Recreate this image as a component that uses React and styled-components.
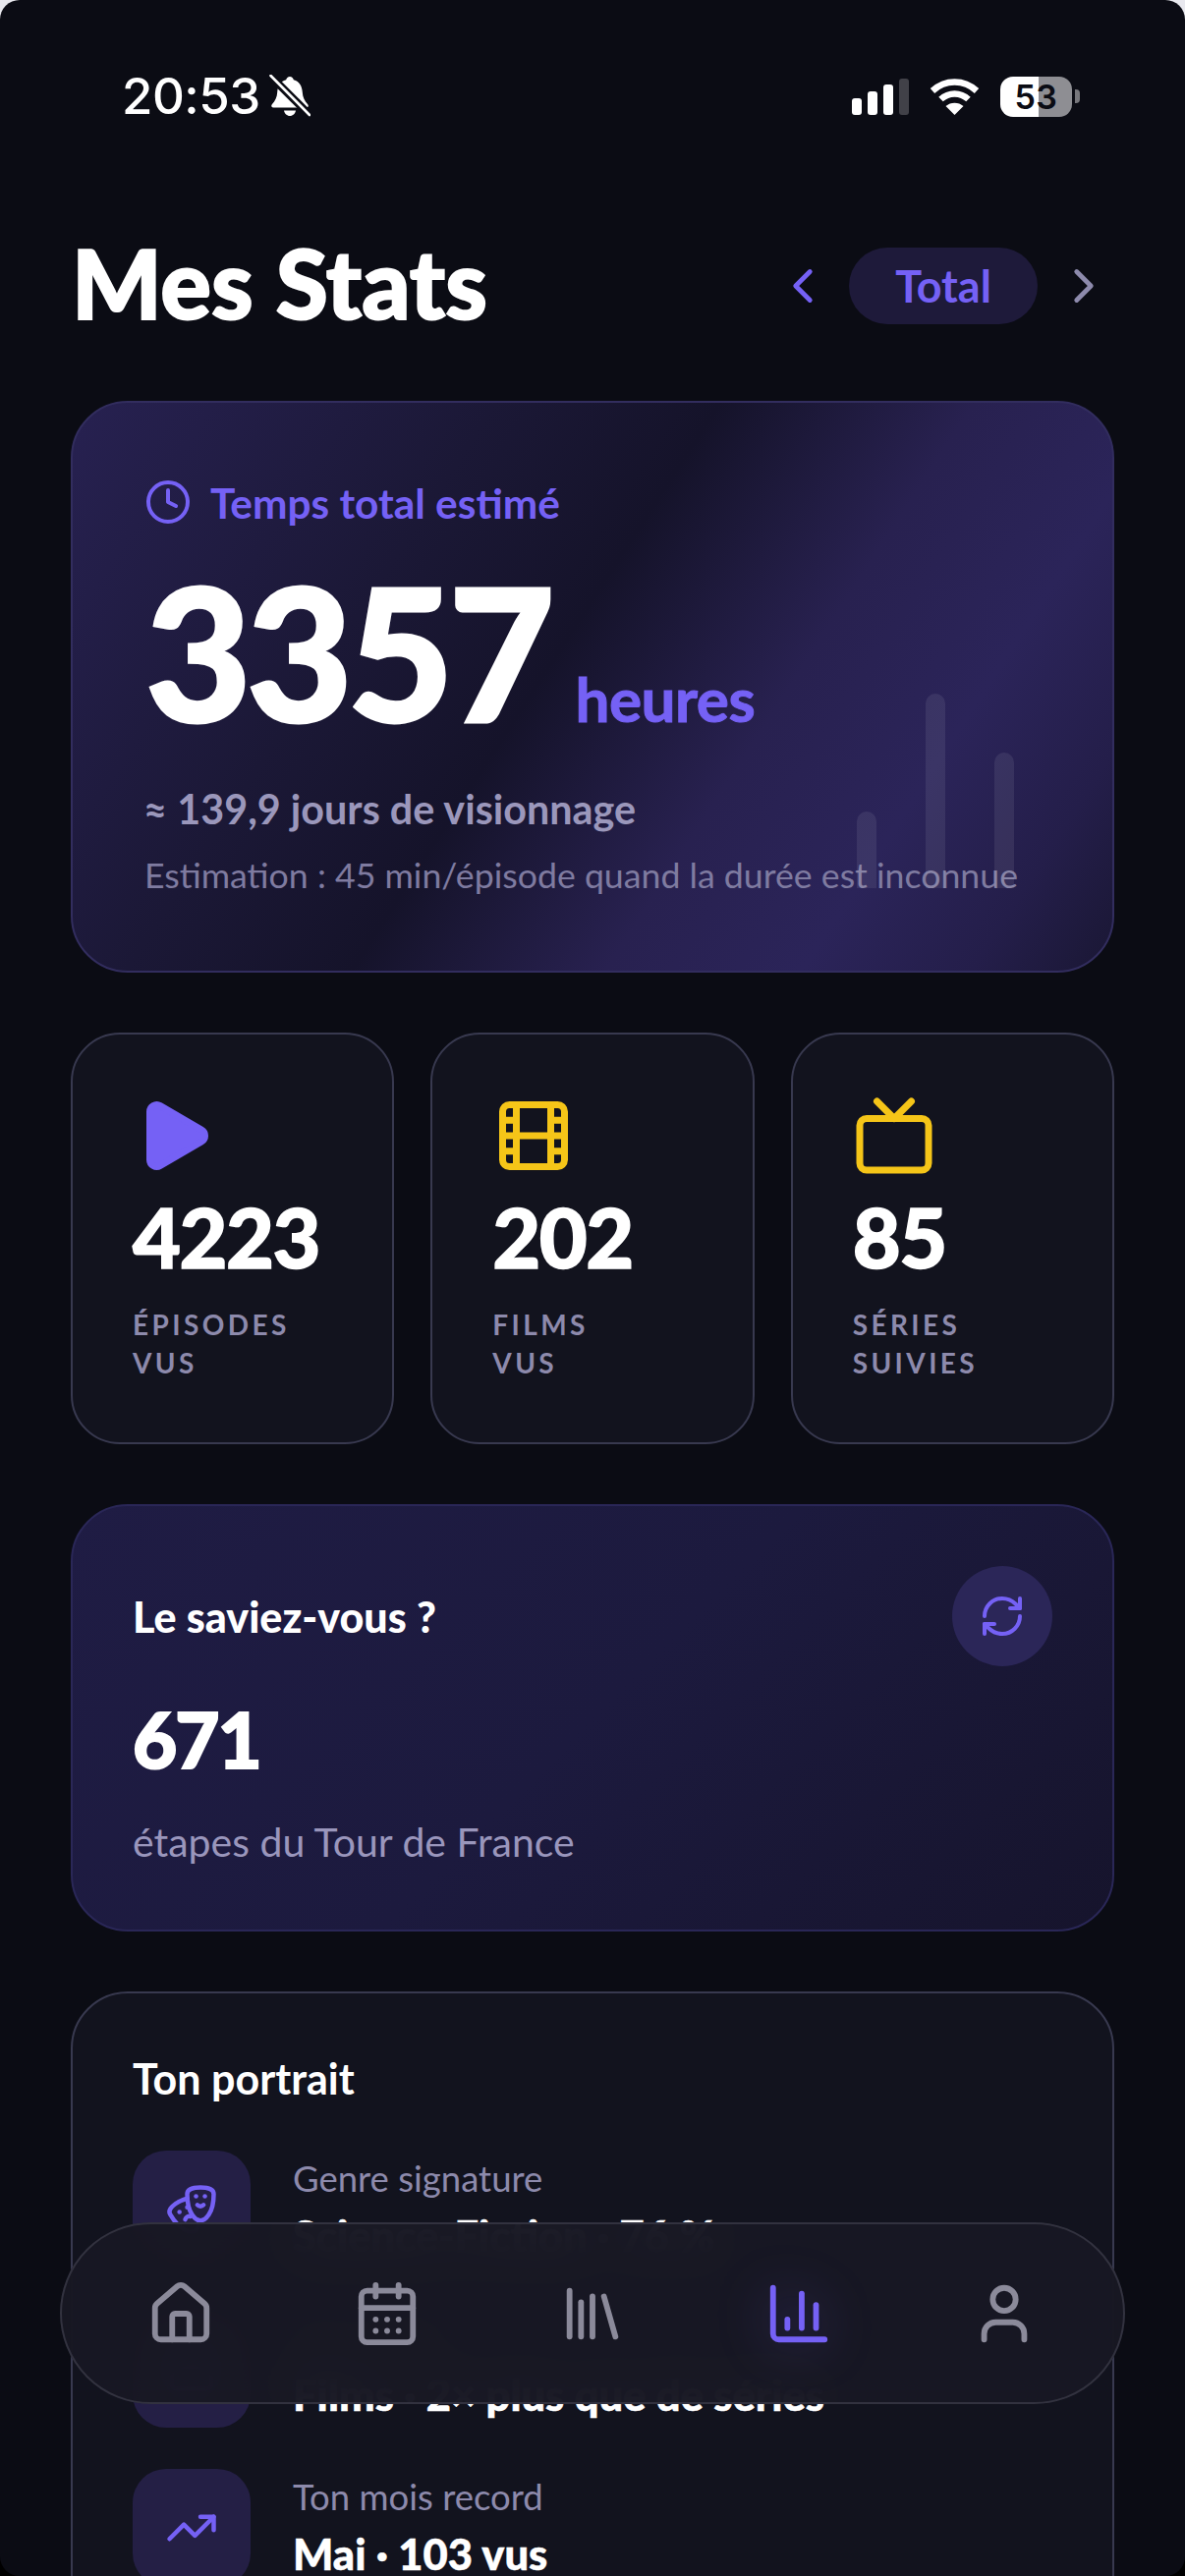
import React from "react";
import styled, { createGlobalStyle } from "styled-components";
import {
  Clock, ChevronLeft, ChevronRight, Play, Film, Tv, RefreshCw, Drama, Clapperboard,
  TrendingUp, House, CalendarDays, Library, ChartColumn, User,
} from "lucide-react";

const FONT = `"Lato", "Noto Sans", sans-serif`;
const PURPLE = "#7561f5";
const YELLOW = "#f5c518";
const MUTED = "#8d8aac";

const Global = createGlobalStyle`
  html, body { margin: 0; padding: 0; background: linear-gradient(180deg, #e8e8ee 0, #e8e8ee 50%, #000 50%, #000 100%); }
  * { box-sizing: border-box; }
`;

const Screen = styled.div`
  position: relative;
  width: 1206px;
  height: 2622px;
  overflow: hidden;
  border-radius: 20px;
  background: #0b0c14;
  font-family: ${FONT};
  color: #fff;
`;

const StatusBar = styled.div`
  display: flex;
  justify-content: space-between;
  align-items: center;
  height: 42px;
  margin-top: 77px;
  padding: 0 107px 0 124px;
`;
const StatusLeft = styled.div`
  display: flex;
  align-items: center;
  gap: 9px;
`;
const Time = styled.span`
  font-family: "Inter", "Liberation Sans", sans-serif;
  font-size: 51px;
  font-weight: 500;
  line-height: 42px;
  letter-spacing: -0.5px;
`;
const StatusRight = styled.div`
  display: flex;
  align-items: center;
  gap: 21px;
`;
const Signal = styled.div`
  display: flex;
  align-items: flex-end;
  gap: 6px;
  height: 37px;
`;
const SignalBar = styled.span`
  width: 10px;
  height: ${(p) => p.$h}px;
  border-radius: 3px;
  background: ${(p) => (p.$off ? "#414148" : "#fff")};
`;
const BatteryWrap = styled.div`
  display: flex;
  align-items: center;
  gap: 3px;
`;
const Battery = styled.div`
  display: flex;
  align-items: center;
  justify-content: center;
  width: 73px;
  height: 41px;
  border-radius: 13px;
  background: linear-gradient(90deg, #fff 0, #fff 54%, #8e8e93 54%, #8e8e93 100%);
  color: #0b0c14;
  font-family: "Inter", "Liberation Sans", sans-serif;
  font-size: 34px;
  font-weight: 600;
  letter-spacing: 0.5px;
`;
const BatteryTip = styled.span`
  width: 5px;
  height: 14px;
  border-radius: 0 4px 4px 0;
  background: #77777c;
`;

const Content = styled.main`
  display: flex;
  flex-direction: column;
  gap: 61px;
  padding: 0 72px;
`;

const Header = styled.header`
  display: flex;
  justify-content: space-between;
  align-items: center;
  height: 78px;
  margin-top: 133px;
  margin-bottom: 17px;
  padding-right: 2px;
`;
const Title = styled.h1`
  margin: -6px 0 0 1px;
  font-size: 96.5px;
  font-weight: 900;
  line-height: 78px;
  letter-spacing: 0;
  -webkit-text-stroke: 2px #fff;
`;
const Period = styled.div`
  display: flex;
  align-items: center;
  gap: 18px;
  color: ${MUTED};
`;
const Pill = styled.div`
  display: flex;
  align-items: center;
  justify-content: center;
  width: 192px;
  height: 78px;
  border-radius: 39px;
  background: #1e1a3a;
  color: ${PURPLE};
  font-size: 45px;
  font-weight: 700;
`;

const Hero = styled.section`
  position: relative;
  height: 582px;
  padding: 77px 75px 0;
  border: 2px solid #322d5e;
  border-radius: 58px;
  overflow: hidden;
  background: linear-gradient(123deg, #272151 0%, #1b1836 30%, #15132a 46%, #282150 64%, #2b2459 78%, #241e4a 90%, #1a1734 100%);
`;
const HeroLabel = styled.div`
  display: flex;
  align-items: center;
  gap: 19px;
  height: 48px;
  margin-left: -2px;
  color: ${PURPLE};
  font-size: 42.4px;
  font-weight: 700;
`;
const HeroValue = styled.div`
  display: flex;
  align-items: baseline;
  gap: 26px;
  height: 168px;
  margin-top: 38px;
  line-height: 180px;
`;
const HeroNumber = styled.span`
  font-size: 186px;
  font-weight: 900;
  letter-spacing: -5px;
  margin-left: -1px;
  -webkit-text-stroke: 3px #fff;
`;
const HeroUnit = styled.span`
  color: ${PURPLE};
  font-size: 62px;
  font-weight: 700;
  letter-spacing: -0.5px;
  -webkit-text-stroke: 1px ${PURPLE};
`;
const HeroDays = styled.div`
  margin-top: 58px;
  margin-left: -3px;
  color: #9b97bb;
  font-size: 41.3px;
  font-weight: 700;
  line-height: 48px;
`;
const HeroNote = styled.div`
  margin-top: 21px;
  margin-left: -2px;
  color: #7f7ba0;
  font-size: 35.7px;
  font-weight: 400;
  line-height: 46px;
  white-space: nowrap;
`;
const HeroBars = styled.div`
  position: absolute;
  right: 100px;
  bottom: 84px;
  display: flex;
  align-items: flex-end;
  gap: 50px;
`;
const HeroBar = styled.span`
  width: 20px;
  height: ${(p) => p.$h}px;
  border-radius: 10px 10px 0 0;
  background: rgba(255, 255, 255, 0.08);
`;

const StatsGrid = styled.section`
  display: grid;
  grid-template-columns: repeat(3, 1fr);
  gap: 37px;
`;
const StatCard = styled.article`
  height: 419px;
  padding: 61px 0 0 61px;
  border: 2px solid #38394f;
  border-radius: 50px;
  background: #12131e;
  color: ${(p) => p.$color};
`;
const StatNumber = styled.div`
  margin-top: 16px;
  color: #fff;
  font-size: 84.5px;
  font-weight: 900;
  line-height: 84px;
  letter-spacing: -1.5px;
  -webkit-text-stroke: 1.5px #fff;
`;
const StatLabel = styled.div`
  margin-top: 28px;
  color: ${MUTED};
  font-size: 28px;
  font-weight: 700;
  line-height: 38.5px;
  letter-spacing: 3.4px;
  text-transform: uppercase;
`;

const Fact = styled.section`
  position: relative;
  height: 435px;
  padding: 89px 61px 0;
  border: 2px solid #2a2757;
  border-radius: 58px;
  background: linear-gradient(135deg, #1f1c44 0%, #1c1a3e 50%, #16142c 100%);
`;
const FactTitle = styled.h2`
  margin: 0;
  font-size: 43px;
  font-weight: 900;
  line-height: 48px;
`;
const FactButton = styled.div`
  position: absolute;
  top: 61px;
  right: 61px;
  display: flex;
  align-items: center;
  justify-content: center;
  width: 102px;
  height: 102px;
  border-radius: 50%;
  background: #2b2658;
  color: ${PURPLE};
`;
const FactNumber = styled.div`
  margin-top: 58px;
  font-size: 78px;
  font-weight: 900;
  line-height: 84px;
  letter-spacing: -2px;
  -webkit-text-stroke: 2px #fff;
`;
const FactText = styled.div`
  margin-top: 38px;
  color: #9a96bc;
  font-size: 41px;
  font-weight: 400;
  line-height: 50px;
`;

const Portrait = styled.section`
  height: 800px;
  padding: 63px 61px 0;
  border: 2px solid #38394f;
  border-radius: 58px;
  background: #12131e;
`;
const PortraitTitle = styled.h2`
  margin: 0 0 49px;
  font-size: 43px;
  font-weight: 700;
  line-height: 48px;
`;
const Rows = styled.div`
  display: flex;
  flex-direction: column;
  gap: 42px;
`;
const Row = styled.div`
  display: flex;
  align-items: flex-start;
  gap: 43px;
`;
const RowIcon = styled.div`
  flex: none;
  display: flex;
  align-items: center;
  justify-content: center;
  width: 120px;
  height: 120px;
  border-radius: 34px;
  background: #241f45;
  color: ${PURPLE};
`;
const RowLabel = styled.div`
  margin-top: 6px;
  color: ${MUTED};
  font-size: 36.5px;
  font-weight: 400;
  line-height: 44px;
`;
const RowValue = styled.div`
  margin-top: 10px;
  font-size: 43.5px;
  font-weight: 900;
  line-height: 52px;
  white-space: nowrap;
  -webkit-text-stroke: 0.5px #fff;
`;

const Nav = styled.nav`
  position: absolute;
  left: 61px;
  top: 2262px;
  display: flex;
  align-items: center;
  justify-content: center;
  width: 1084px;
  height: 185px;
  border: 2px solid #32323f;
  border-radius: 93px;
  background: rgba(24, 24, 35, 0.97);
  backdrop-filter: blur(24px);
`;
const NavItem = styled.div`
  display: flex;
  justify-content: center;
  width: 209.5px;
  color: ${(p) => (p.$active ? PURPLE : "#8b8a9a")};
  filter: ${(p) => (p.$active ? "drop-shadow(0 0 26px rgba(117, 97, 245, 0.35))" : "none")};
`;

const BellSlash = () => (
  <svg width="42" height="44" viewBox="0 0 42 44" aria-hidden="true">
    <path d="M21 2c-2 0-3.4 1.3-3.8 3.2C11 6.8 8.6 12 8.2 18c-.3 5-2 8.4-5.4 12.2-1.2 1.4-.4 3.3 1.6 3.3h33.2c2 0 2.8-1.9 1.6-3.3-3.4-3.8-5.1-7.2-5.4-12.2-.4-6-2.8-11.2-9-12.8C24.4 3.3 23 2 21 2z" fill="#fff" />
    <path d="M15 36.5h12c-.6 3.2-3 5.5-6 5.5s-5.4-2.3-6-5.5z" fill="#fff" />
    <path d="M1 1 L41 41" stroke="#0b0c14" strokeWidth="8" />
    <path d="M1.5 1 L41 41" stroke="#fff" strokeWidth="2.6" strokeLinecap="round" />
  </svg>
);

const Wifi = () => (
  <svg width="51" height="37" viewBox="0 0 51 37" fill="none" aria-hidden="true">
    <path d="M3 12.5C16 0.5 35 0.5 48 12.5" stroke="#fff" strokeWidth="6.5" strokeLinecap="butt" />
    <path d="M11.5 21C19.5 13.5 31.5 13.5 39.5 21" stroke="#fff" strokeWidth="6.5" />
    <path d="M25.5 37 L16.5 28C21.5 23.5 29.500 23.5 34.5 28z" fill="#fff" />
  </svg>
);

const stats = [
  { icon: <Play size={84} strokeWidth={2} fill={PURPLE} />, color: PURPLE, n: "4223", a: "Épisodes", b: "vus" },
  { icon: <Film size={84} strokeWidth={2} />, color: YELLOW, n: "202", a: "Films", b: "vus" },
  { icon: <Tv size={84} strokeWidth={2} />, color: YELLOW, n: "85", a: "Séries", b: "suivies" },
];

const rows = [
  { icon: <Drama size={54} strokeWidth={2} />, label: "Genre signature", value: "Science-Fiction · 76 %" },
  { icon: <Clapperboard size={54} strokeWidth={2} />, label: "Ton profil", value: "Films · 2× plus que de séries" },
  { icon: <TrendingUp size={54} strokeWidth={2} />, label: "Ton mois record", value: "Mai · 103 vus" },
];

const navItems = [
  { Icon: House },
  { Icon: CalendarDays },
  { Icon: Library },
  { Icon: ChartColumn, active: true },
  { Icon: User },
];

export default function App() {
  return (
    <>
      <Global />
      <Screen>
        <StatusBar>
          <StatusLeft>
            <Time>20:53</Time>
            <BellSlash />
          </StatusLeft>
          <StatusRight>
            <Signal>
              <SignalBar $h={17} />
              <SignalBar $h={24} />
              <SignalBar $h={31} />
              <SignalBar $h={37} $off />
            </Signal>
            <Wifi />
            <BatteryWrap>
              <Battery>53</Battery>
              <BatteryTip />
            </BatteryWrap>
          </StatusRight>
        </StatusBar>
        <Content>
          <Header>
            <Title>Mes Stats</Title>
            <Period>
              <ChevronLeft size={58} color={PURPLE} strokeWidth={2} />
              <Pill>Total</Pill>
              <ChevronRight size={58} strokeWidth={2} />
            </Period>
          </Header>
          <Hero>
            <HeroBars>
              <HeroBar $h={78} />
              <HeroBar $h={198} />
              <HeroBar $h={138} />
            </HeroBars>
            <HeroLabel>
              <Clock size={48} strokeWidth={2} />
              Temps total estimé
            </HeroLabel>
            <HeroValue>
              <HeroNumber>3357</HeroNumber>
              <HeroUnit>heures</HeroUnit>
            </HeroValue>
            <HeroDays>≈{"\u202F"}139,9 jours de visionnage</HeroDays>
            <HeroNote>Estimation : 45 min/épisode quand la durée est inconnue</HeroNote>
          </Hero>
          <StatsGrid>
            {stats.map((s) => (
              <StatCard key={s.a} $color={s.color}>
                {s.icon}
                <StatNumber>{s.n}</StatNumber>
                <StatLabel>
                  {s.a}
                  <br />
                  {s.b}
                </StatLabel>
              </StatCard>
            ))}
          </StatsGrid>
          <Fact>
            <FactTitle>Le saviez-vous ?</FactTitle>
            <FactButton>
              <RefreshCw size={48} strokeWidth={2} />
            </FactButton>
            <FactNumber>671</FactNumber>
            <FactText>étapes du Tour de France</FactText>
          </Fact>
          <Portrait>
            <PortraitTitle>Ton portrait</PortraitTitle>
            <Rows>
              {rows.map((r) => (
                <Row key={r.label}>
                  <RowIcon>{r.icon}</RowIcon>
                  <div>
                    <RowLabel>{r.label}</RowLabel>
                    <RowValue>{r.value}</RowValue>
                  </div>
                </Row>
              ))}
            </Rows>
          </Portrait>
        </Content>
        <Nav>
          {navItems.map(({ Icon, active }, i) => (
            <NavItem key={i} $active={active}>
              <Icon size={70} strokeWidth={2} />
            </NavItem>
          ))}
        </Nav>
      </Screen>
    </>
  );
}
